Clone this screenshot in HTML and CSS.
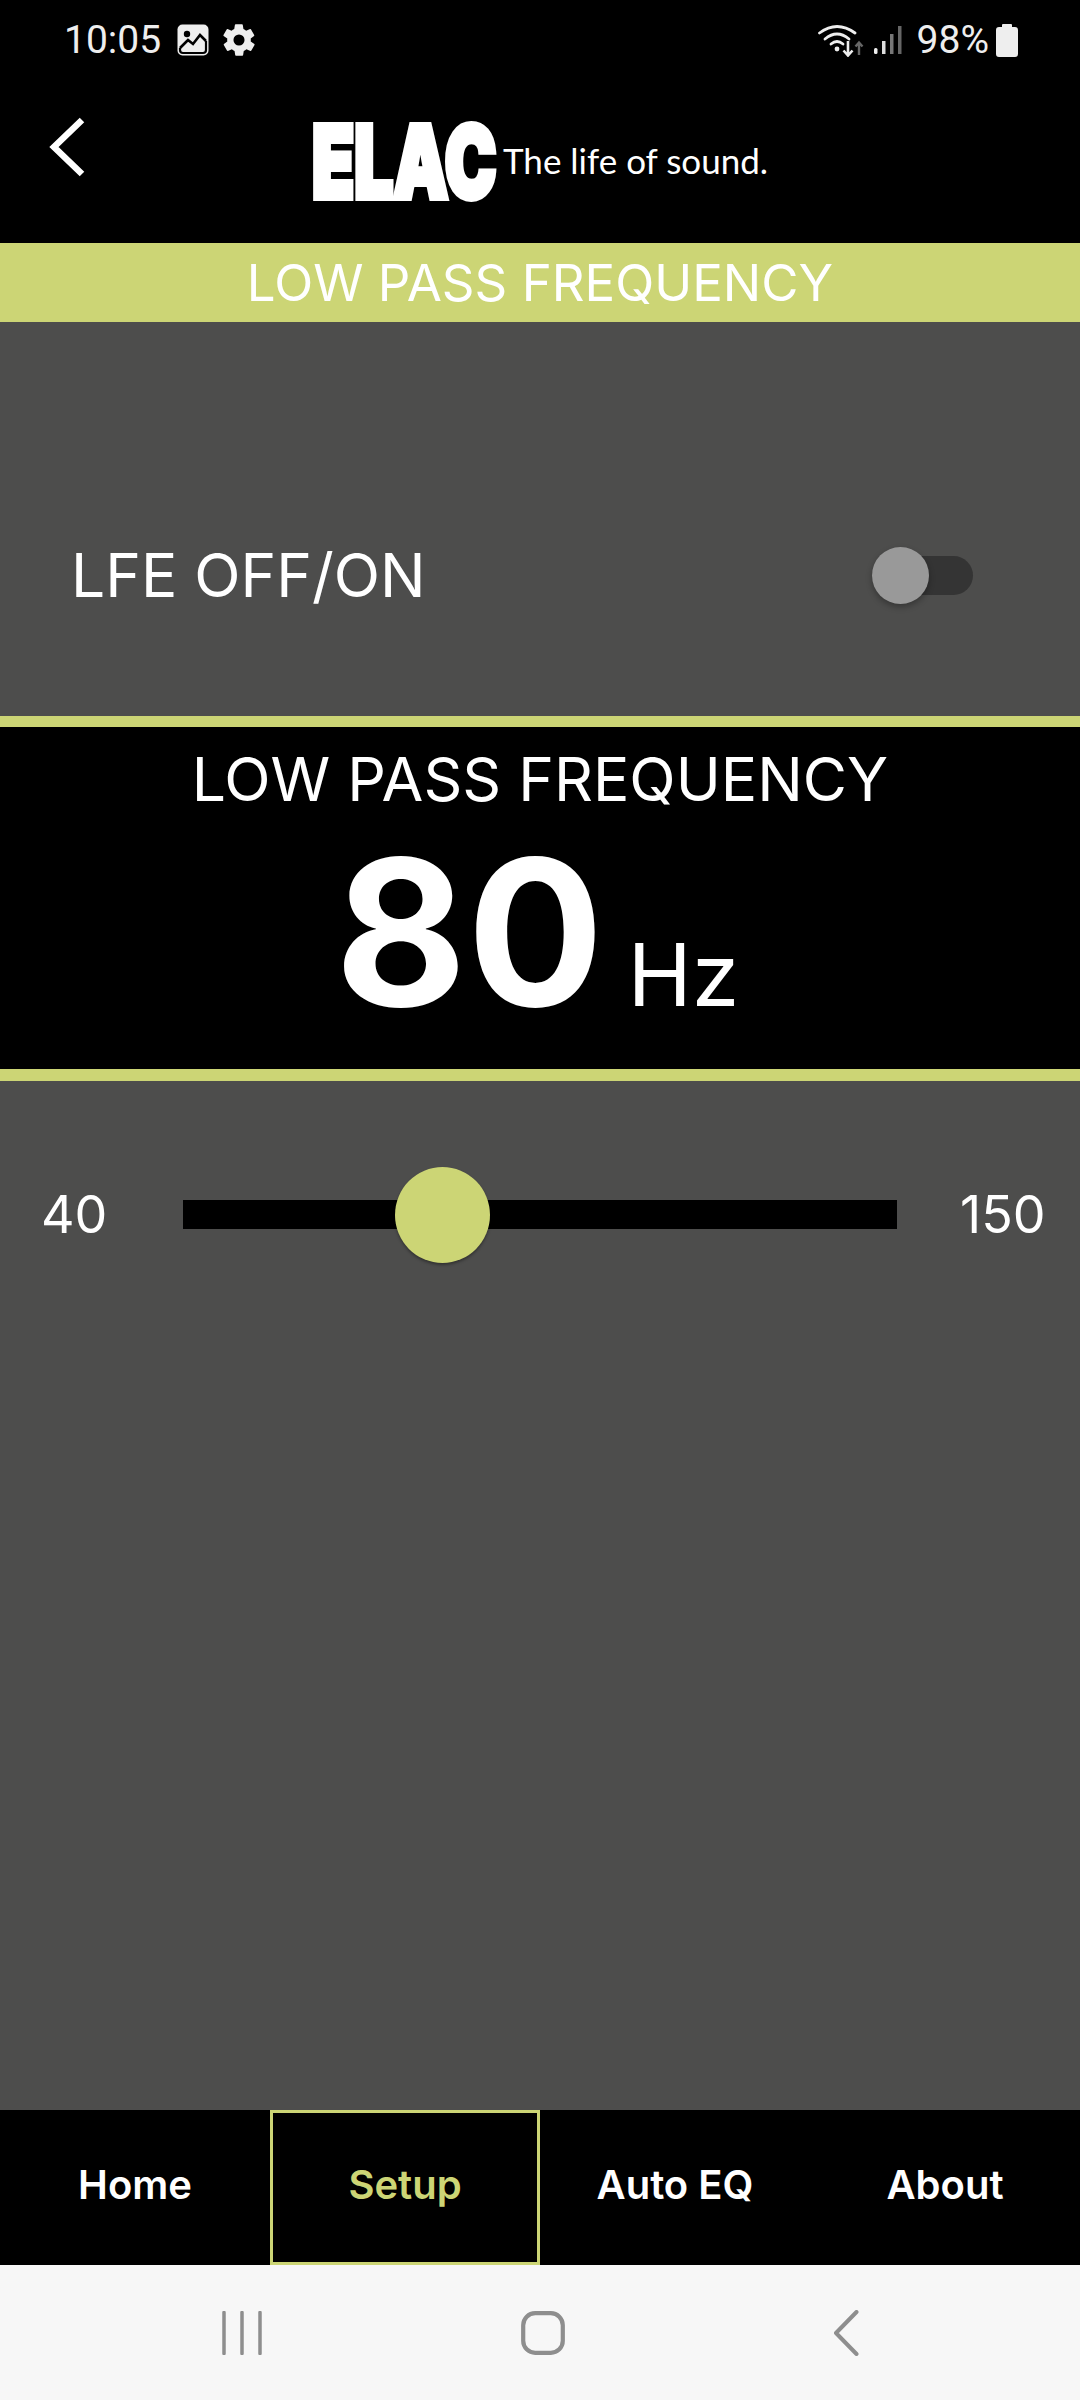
FILE: index.html
```html
<!DOCTYPE html>
<html lang="en">
<head>
    <meta charset="UTF-8">
    <meta name="viewport" content="width=device-width, initial-scale=1.0">
    <title>Low Pass Frequency</title>
    <link rel="stylesheet" href="styles.css">
</head>
<body>
    <div class="app">
        <div class="status-bar">
            <div class="status-left">
                <span class="status-time">10:05</span>
                <svg class="icon-image" width="32" height="32" viewBox="0 0 32 32">
                    <rect x="0.5" y="0.5" width="31" height="31" rx="5" fill="#eee"/>
                    <circle cx="10" cy="10" r="3.2" fill="#000"/>
                    <path d="M3 24 L11 16 L16 20 L23 11 L29 17" fill="none" stroke="#000" stroke-width="2.6"/>
                    <path d="M3 24 V26 Q3 29 6 29 H26 Q29 29 29 26 V17" fill="none" stroke="#000" stroke-width="2.2"/>
                </svg>
                <svg class="icon-gear" width="38" height="38" viewBox="0 0 24 24">
                    <path fill="#eee" fill-rule="evenodd" d="M19.4 13a7.6 7.6 0 0 0 0-2l2.1-1.6a.5.5 0 0 0 .1-.6l-2-3.5a.5.5 0 0 0-.6-.2l-2.5 1a7.300 7.300 0 0 0-1.700-1l-.4-2.600a.5.5 0 0 0-.5-.4h-4a.5.5 0 0 0-.5.4l-.4 2.600a7.300 7.300 0 0 0-1.700 1l-2.500-1a.5.5 0 0 0-.6.2l-2 3.500a.5.5 0 0 0 .1.600L4.600 11a7.600 7.600 0 0 0 0 2l-2.100 1.600a.5.5 0 0 0-.1.600l2 3.500a.5.5 0 0 0 .6.200l2.500-1a7.300 7.300 0 0 0 1.700 1l.4 2.600a.5.5 0 0 0 .5.400h4a.5.5 0 0 0 .5-.4l.4-2.600a7.300 7.300 0 0 0 1.700-1l2.500 1a.5.5 0 0 0 .6-.2l2-3.500a.5.5 0 0 0-.1-.6zM12 15.500a3.500 3.500 0 1 1 0-7 3.500 3.500 0 0 1 0 7z"/>
                </svg>
            </div>
            <div class="status-right">
                <svg class="icon-wifi" width="46" height="34" viewBox="0 0 46 34">
                    <g fill="none" stroke="#eee" stroke-width="2.800" stroke-linecap="round">
                        <path d="M1.500 10 Q19 -3 37 10"/>
                        <path d="M7 16 Q19 6 31 16"/>
                        <path d="M13 21 Q19 16 25 21"/>
                    </g>
                    <circle cx="19" cy="26" r="2.400" fill="#eee"/>
                    <path d="M30 18 V32 M25.500 27.500 L30 32.500 L34.500 27.500" fill="none" stroke="#eee" stroke-width="2.600"/>
                    <path d="M41 32 V20 M37.500 23.500 L41 19.500 L44.500 23.500" fill="none" stroke="#666" stroke-width="2.400"/>
                </svg>
                <svg class="icon-signal" width="28" height="30" viewBox="0 0 28 30">
                    <rect x="0" y="23" width="3.500" height="6" rx="1.500" fill="#eee"/>
                    <rect x="8" y="16" width="3.500" height="13" fill="#ddd"/>
                    <rect x="16" y="9" width="3.500" height="20" fill="#777"/>
                    <rect x="24" y="1" width="3.500" height="28" fill="#666"/>
                </svg>
                <span class="status-pct">98%</span>
                <svg class="icon-battery" width="22" height="33" viewBox="0 0 22 33">
                    <path fill="#eee" d="M7 0 H15 Q16 0 16 1 V3 H19 Q22 3 22 6 V30 Q22 33 19 33 H3 Q0 33 0 30 V6 Q0 3 3 3 H6 V1 Q6 0 7 0z"/>
                </svg>
            </div>
        </div>

        <div class="app-header">
            <svg class="back-arrow" width="36" height="60" viewBox="0 0 36 60">
                <path d="M33 3 L5 30 L33 57" fill="none" stroke="#fff" stroke-width="6.500"/>
            </svg>
            <div class="logo">
                <div class="logo-mark"><span class="logo-text">ELAC</span></div>
                <span class="logo-tag">The life of sound.</span>
            </div>
        </div>

        <div class="page-title">LOW PASS FREQUENCY</div>

        <div class="lfe-row">
            <span class="lfe-label">LFE OFF/ON</span>
            <div class="switch">
                <div class="switch-thumb"></div>
            </div>
        </div>

        <div class="freq-panel">
            <div class="freq-title">LOW PASS FREQUENCY</div>
            <div class="freq-value">
                <span class="freq-num">80</span>
                <span class="freq-unit">Hz</span>
            </div>
        </div>

        <div class="slider-area">
            <div class="slider-row">
                <span class="slider-min">40</span>
                <div class="slider-track">
                    <div class="slider-thumb"></div>
                </div>
                <span class="slider-max">150</span>
            </div>
        </div>

        <div class="tabs">
            <div class="tab">Home</div>
            <div class="tab tab-active">Setup</div>
            <div class="tab">Auto EQ</div>
            <div class="tab">About</div>
        </div>

        <div class="system-nav">
            <svg width="40" height="44" viewBox="0 0 40 44">
                <path d="M2 1.500 V42.500 M20 1.500 V42.500 M38 1.500 V42.500" fill="none" stroke="#8e8e8e" stroke-width="3.500" stroke-linecap="round"/>
            </svg>
            <svg width="44" height="44" viewBox="0 0 44 44">
                <rect x="2.200" y="2.200" width="39.600" height="39.600" rx="12" fill="none" stroke="#8e8e8e" stroke-width="4.200"/>
            </svg>
            <svg class="nav-back" width="26" height="46" viewBox="0 0 26 46">
                <path d="M23.500 2 L3 23 L23.500 44" fill="none" stroke="#8e8e8e" stroke-width="4" stroke-linecap="round" stroke-linejoin="round"/>
            </svg>
        </div>
    </div>
</body>
</html>
```

FILE: styles.css
```css
* {
    margin: 0;
    padding: 0;
    box-sizing: border-box;
}

body {
    font-family: Inter, Arial, sans-serif;
    background: #000;
    color: #fff;
}

.app {
    width: 1080px;
    height: 2400px;
    display: flex;
    flex-direction: column;
}

.status-bar {
    height: 80px;
    flex: none;
    display: flex;
    justify-content: space-between;
    align-items: center;
    padding: 0 62px 0 64px;
    color: #eee;
    font-family: Roboto, sans-serif;
    font-size: 39px;
}

.status-left,
.status-right {
    display: flex;
    align-items: center;
}

.icon-image {
    margin-left: 16px;
}

.icon-gear {
    margin-left: 11px;
}

.icon-signal {
    margin-left: 10px;
}

.status-pct {
    margin-left: 15px;
}

.icon-battery {
    margin-left: 7px;
}

.app-header {
    height: 163px;
    flex: none;
    display: flex;
    align-items: flex-start;
    padding: 37px 0 0 49px;
}

.back-arrow {
    margin-right: 227px;
}

.logo {
    display: flex;
    align-items: flex-start;
    margin-top: 5px;
}

.logo-mark {
    width: 184px;
    height: 80px;
    flex: none;
}

.logo-text {
    display: inline-block;
    font-size: 100px;
    font-weight: 900;
    line-height: 80px;
    white-space: nowrap;
    -webkit-text-stroke: 6px #fff;
    transform: scaleX(0.69);
    transform-origin: left center;
}

.logo-tag {
    font-family: Lato, sans-serif;
    font-size: 35px;
    margin: 17px 0 0 7px;
}

.page-title {
    height: 79px;
    flex: none;
    background: #ccd575;
    font-size: 51px;
    line-height: 79px;
    text-align: center;
}

.lfe-row {
    height: 394px;
    flex: none;
    background: #4d4d4c;
    display: flex;
    justify-content: space-between;
    align-items: center;
    padding: 112px 107px 0 71px;
}

.lfe-label {
    font-size: 60.5px;
}

.switch {
    width: 101px;
    height: 39px;
    background: #343434;
    border-radius: 20px;
    display: flex;
    align-items: center;
}

.switch-thumb {
    width: 57px;
    height: 57px;
    flex: none;
    border-radius: 50%;
    background: #999;
    box-shadow: 0 3px 6px rgba(0, 0, 0, 0.3);
}

.freq-panel {
    height: 365px;
    flex: none;
    background: #000;
    border-top: 11px solid #ccd575;
    border-bottom: 12px solid #ccd575;
    text-align: center;
}

.freq-title {
    font-size: 60.6px;
    line-height: 70px;
    padding-top: 17px;
}

.freq-value {
    display: flex;
    justify-content: center;
    align-items: baseline;
    line-height: 200px;
    margin-top: 18px;
    padding-right: 6px;
}

.freq-num {
    font-size: 203px;
    font-weight: 700;
}

.freq-unit {
    font-size: 86px;
    margin-left: 24px;
}

.slider-area {
    flex: 1;
    background: #4d4d4c;
    padding-top: 85px;
}

.slider-row {
    height: 96px;
    display: flex;
    align-items: center;
    font-size: 52px;
}

.slider-min {
    width: 183px;
    padding-left: 41px;
    flex: none;
}

.slider-track {
    width: 714px;
    height: 29px;
    flex: none;
    background: #000;
    position: relative;
}

.slider-thumb {
    position: absolute;
    left: 212px;
    top: -33px;
    width: 95px;
    height: 96px;
    border-radius: 50%;
    background: #ccd575;
    box-shadow: 0 2px 3px rgba(0, 0, 0, 0.35);
}

.slider-max {
    flex: 1;
    padding-left: 63px;
}

.tabs {
    height: 155px;
    flex: none;
    display: grid;
    grid-template-columns: repeat(4, 270px);
    background: #000;
}

.tab {
    display: flex;
    justify-content: center;
    align-items: center;
    font-size: 40px;
    font-weight: 600;
    padding-bottom: 6px;
}

.tab-active {
    color: #ccd575;
    border: 3px solid #ccd575;
}

.system-nav {
    height: 135px;
    flex: none;
    background: #f7f7f7;
    display: flex;
    align-items: center;
    padding-left: 222px;
    gap: 259px;
}

.nav-back {
    margin-left: 9px;
}
```
